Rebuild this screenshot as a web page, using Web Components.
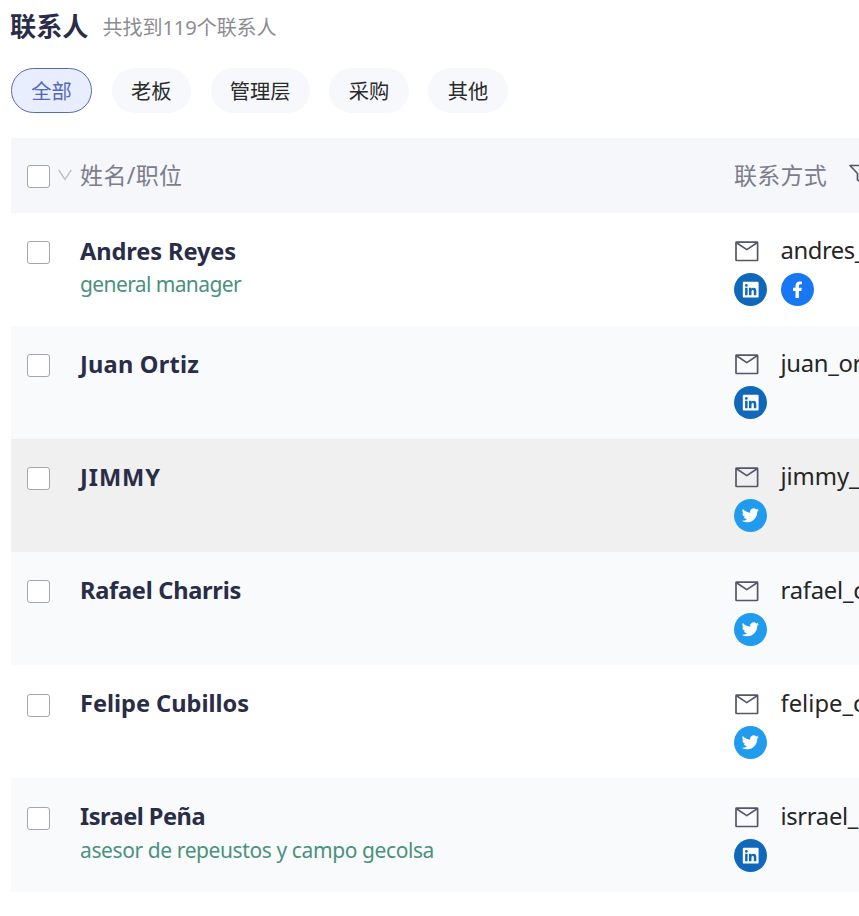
<!DOCTYPE html>
<html lang="zh-CN">
<head>
<meta charset="utf-8">
<title>联系人</title>
<style>
html,body{margin:0;height:100%;overflow:hidden;background:#fff}
body{font-family:"Noto Sans","Noto Sans CJK SC",sans-serif;color:#292d47}
</style>
</head>
<body>
<contacts-page></contacts-page>
<script>
const define=(name,html,setup)=>{
  const t=document.createElement('template');t.innerHTML=html;
  customElements.define(name,class extends HTMLElement{
    connectedCallback(){
      if(this.shadowRoot)return;
      this.attachShadow({mode:'open'}).append(t.content.cloneNode(true));
      if(setup)setup(this,this.shadowRoot);
    }
  });
};

/* Text set to a given advance width by adjusting its tracking. */
define('fit-text',`<style>:host{display:inline-block;white-space:pre;flex:none}span{display:inline-block}</style><span><slot></slot></span>`,
(el,r)=>{
  const s=r.querySelector('span'),w=+el.getAttribute('w');
  const n=[...el.textContent].length;
  s.style.letterSpacing=((w-s.getBoundingClientRect().width)/n)+'px';
});

define('check-box',`<style>:host{display:block;box-sizing:border-box;width:23px;height:23px;border:1px solid #a4a6ae;border-radius:3px;background:#fff;flex:none}</style>`);

define('mail-icon',`<style>:host{display:block;width:24px;height:21px}svg{display:block}</style>
<svg width="24" height="21" viewBox="0 0 24 21" fill="none" stroke="#54566a" stroke-width="1.7" stroke-linejoin="round"><rect x="1" y="1.2" width="21.6" height="18.3" rx=".6"/><path d="M1.5 1.8 11.8 8.6 22.1 1.8"/></svg>`);

define('filter-icon',`<style>:host{display:block;width:22px;height:20px;flex:none}svg{display:block}</style>
<svg width="22" height="20" viewBox="0 0 22 20" fill="none" stroke="#54566a" stroke-width="1.7" stroke-linejoin="round"><path d="M1 1.5H21L13.5 9.5V18.5L8.5 16V9.5Z"/></svg>`);

const glyphs={
 linkedin:['#1068bb','<path fill="#fff" fill-rule="evenodd" d="M10 8.8H23.4Q24.6 8.8 24.6 10V23.4Q24.6 24.6 23.4 24.6H10Q8.8 24.6 8.8 23.4V10Q8.8 8.8 10 8.8ZM11.1 14.8V22.3H13.6V14.8ZM12.35 11A1.4 1.4 0 1 0 12.35 13.8A1.4 1.4 0 1 0 12.35 11ZM15 14.8V22.3H17.5V18.4Q17.6 16.8 18.7 16.8Q19.8 16.8 19.8 18.4V22.3H22.3V17.8Q22.2 14.7 19.6 14.7Q18.2 14.7 17.4 15.8V14.8Z"/>'],
 facebook:['#1877f2','<path fill="#fff" d="M14.5 25V17.9H12V14.8H14.5V12.6C14.5 10 16.1 8.4 18.6 8.4C19.8 8.4 20.9 8.6 20.9 8.6V11.3H19.6C18.3 11.3 17.9 12.1 17.9 12.9V14.8H20.8L20.3 17.9H17.9V25Z"/>'],
 twitter:['#219bed','<path fill="#fff" transform="translate(7.7 7.7) scale(.72)" d="M23.95 4.57a10 10 0 0 1-2.82.77 4.96 4.96 0 0 0 2.16-2.72c-.95.55-2 .95-3.13 1.18a4.92 4.92 0 0 0-8.38 4.48C7.69 8.1 4.07 6.13 1.64 3.16a4.82 4.82 0 0 0-.67 2.48c0 1.71.87 3.21 2.19 4.1a4.9 4.9 0 0 1-2.23-.62v.06a4.92 4.92 0 0 0 3.95 4.83 5 5 0 0 1-2.21.08 4.94 4.94 0 0 0 4.6 3.42A9.87 9.87 0 0 1 0 19.54a14 14 0 0 0 7.55 2.21c9.05 0 14-7.5 14-13.98 0-.21 0-.42-.02-.63a9.94 9.94 0 0 0 2.46-2.55z"/>']
};
define('social-icon',`<style>:host{display:block;width:33px;height:33px}svg{display:block}</style><svg width="33" height="33" viewBox="0 0 33 33"></svg>`,
(el,r)=>{const [c,p]=glyphs[el.getAttribute('kind')];
 r.querySelector('svg').innerHTML='<circle cx="16.5" cy="16.5" r="16.5" fill="'+c+'"/>'+p;});

define('filter-chip',`<style>
:host{display:flex;box-sizing:border-box;height:45px;width:79.3px;align-items:center;justify-content:center;border-radius:23px;background:#f6f8fb;color:#2a2a2a;font-size:20.3px;line-height:30px;border:1px solid transparent}
:host([wide]){width:99px}
:host([active]){width:81px;background:#e9eefe;border-color:#5569b5;color:#5369b8}
</style><slot></slot>`);

define('contact-row',`<style>
:host{display:grid;grid-template-columns:69px 654px 1fr;height:113.2px;box-sizing:border-box;padding-top:22px;background:#fff}
:host([tint]){background:#f8fafc}
:host([hover]){background:#f0f0f0}
check-box{margin:6.3px 0 0 16px}
.name{font-size:23.6px;line-height:33px;font-weight:700;color:#292d47;height:33px}
.role{font-size:21px;line-height:30px;color:#4b917d;height:30px;margin-top:1.5px}
.mail{display:grid;grid-template-columns:46.5px 1fr;align-items:center;height:33px;font-size:23.8px;line-height:33px;color:#262626}
mail-icon{margin:1px 0 0 1px}
.mail ::slotted(fit-text){margin-top:-1px}
.social{display:flex;gap:14px;margin-top:5.5px}
</style>
<check-box></check-box>
<div><div class="name"><slot name="name"></slot></div><div class="role"><slot name="role"></slot></div></div>
<div><div class="mail"><mail-icon></mail-icon><slot name="mail"></slot></div><div class="social"><slot name="social"></slot></div></div>`);

define('table-head',`<style>
:host{display:grid;grid-template-columns:69px 654px 1fr;height:74.5px;background:#f5f7fb;font-size:23px;color:#7b7d8b;align-items:center;line-height:33px}
.sel{display:flex;align-items:center;padding:2px 0 0 16px;gap:8px}
.c{display:flex;align-items:center;gap:21.5px}
fit-text{margin-top:1px}
filter-icon{margin-top:-2px}
svg{display:block;flex:none;margin-top:-3px}
</style>
<div class="sel"><check-box></check-box><svg width="14" height="12" viewBox="0 0 14 12" fill="none" stroke="#bfc1c8" stroke-width="1.4"><path d="M.7 1 7 10.5 13.3 1"/></svg></div>
<div><fit-text w="102.5">姓名/职位</fit-text></div>
<div class="c"><fit-text w="93">联系方式</fit-text><filter-icon></filter-icon></div>`);

define('page-title',`<style>
:host{display:flex;align-items:center;gap:14px;height:52px}
h1{margin:0 0 0 -1px;font-size:26.2px;line-height:38px;font-weight:700;color:#292d47}
.n{font-size:20px;line-height:30px;color:#8b8c92;padding-top:4px}
</style><h1><slot></slot></h1><div class="n"><slot name="count"></slot></div>`);

define('contacts-page',`<style>
:host{display:block;width:859px;height:916px;overflow:hidden;box-sizing:border-box;padding-left:11px}
.chips{display:flex;gap:19.7px;padding-top:16px;height:70px}
</style>
<page-title>联系人<fit-text slot="count" w="174">共找到119个联系人</fit-text></page-title>
<div class="chips"><filter-chip active>全部</filter-chip><filter-chip>老板</filter-chip><filter-chip wide>管理层</filter-chip><filter-chip>采购</filter-chip><filter-chip>其他</filter-chip></div>
<table-head></table-head><div id="rows"></div>`,
(el,r)=>{
  const rows=[
   ['Andres Reyes',156,'general manager',161,'andres_',84.5,['linkedin','facebook'],''],
   ['Juan Ortiz',119,'',0,'juan_or',81.5,['linkedin'],'tint'],
   ['JIMMY',81,'',0,'jimmy_',79,['twitter'],'hover'],
   ['Rafael Charris',161,'',0,'rafael_c',84,['twitter'],'tint'],
   ['Felipe Cubillos',169,'',0,'felipe_c',84,['twitter'],''],
   ['Israel Peña',125,'asesor de repeustos y campo gecolsa',354,'isrrael_',77.5,['linkedin'],'tint']];
  r.querySelector('#rows').innerHTML=rows.map(([n,nw,o,ow,m,mw,s,k])=>
   `<contact-row ${k}><fit-text slot="name" w="${nw}">${n}</fit-text>${o?`<fit-text slot="role" w="${ow}">${o}</fit-text>`:''}<fit-text slot="mail" w="${mw}">${m}</fit-text>${s.map(x=>`<social-icon slot="social" kind="${x}"></social-icon>`).join('')}</contact-row>`).join('');
});
</script>
</body>
</html>
